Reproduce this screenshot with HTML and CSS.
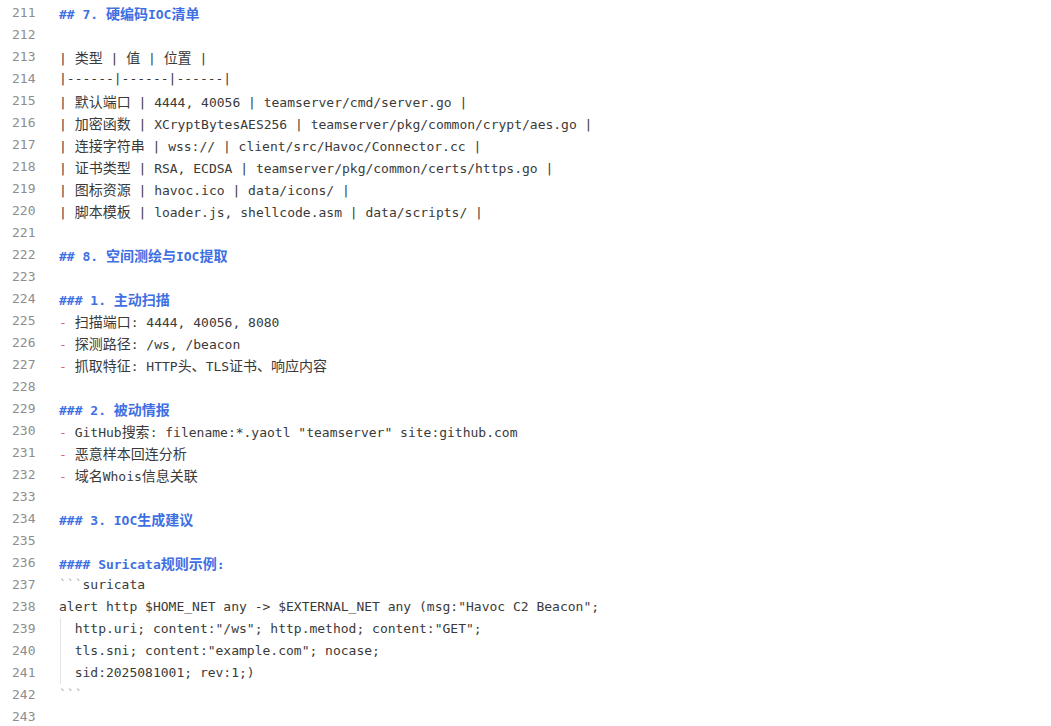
FILE: index.html
```html
<!DOCTYPE html>
<html lang="zh-CN">
<head>
<meta charset="utf-8">
<title>IOC</title>
<link rel="stylesheet" href="styles.css">
</head>
<body>
<div class="editor">
  <div class="row"><span class="ln">211</span><span class="tx h">## 7. <span class="zh">硬编码</span>IOC<span class="zh">清单</span></span></div>
  <div class="row"><span class="ln">212</span><span class="tx"></span></div>
  <div class="row"><span class="ln">213</span><span class="tx">| <span class="zh">类型</span> | <span class="zh">值</span> | <span class="zh">位置</span> |</span></div>
  <div class="row"><span class="ln">214</span><span class="tx">|------|------|------|</span></div>
  <div class="row"><span class="ln">215</span><span class="tx">| <span class="zh">默认端口</span> | 4444, 40056 | teamserver/cmd/server.go |</span></div>
  <div class="row"><span class="ln">216</span><span class="tx">| <span class="zh">加密函数</span> | XCryptBytesAES256 | teamserver/pkg/common/crypt/aes.go |</span></div>
  <div class="row"><span class="ln">217</span><span class="tx">| <span class="zh">连接字符串</span> | wss:// | client/src/Havoc/Connector.cc |</span></div>
  <div class="row"><span class="ln">218</span><span class="tx">| <span class="zh">证书类型</span> | RSA, ECDSA | teamserver/pkg/common/certs/https.go |</span></div>
  <div class="row"><span class="ln">219</span><span class="tx">| <span class="zh">图标资源</span> | havoc.ico | data/icons/ |</span></div>
  <div class="row"><span class="ln">220</span><span class="tx">| <span class="zh">脚本模板</span> | loader.js, shellcode.asm | data/scripts/ |</span></div>
  <div class="row"><span class="ln">221</span><span class="tx"></span></div>
  <div class="row"><span class="ln">222</span><span class="tx h">## 8. <span class="zh">空间测绘与</span>IOC<span class="zh">提取</span></span></div>
  <div class="row"><span class="ln">223</span><span class="tx"></span></div>
  <div class="row"><span class="ln">224</span><span class="tx h">### 1. <span class="zh">主动扫描</span></span></div>
  <div class="row"><span class="ln">225</span><span class="tx"><span class="mk">-</span> <span class="zh">扫描端口</span>: 4444, 40056, 8080</span></div>
  <div class="row"><span class="ln">226</span><span class="tx"><span class="mk">-</span> <span class="zh">探测路径</span>: /ws, /beacon</span></div>
  <div class="row"><span class="ln">227</span><span class="tx"><span class="mk">-</span> <span class="zh">抓取特征</span>: HTTP<span class="zh">头、</span>TLS<span class="zh">证书、响应内容</span></span></div>
  <div class="row"><span class="ln">228</span><span class="tx"></span></div>
  <div class="row"><span class="ln">229</span><span class="tx h">### 2. <span class="zh">被动情报</span></span></div>
  <div class="row"><span class="ln">230</span><span class="tx"><span class="mk">-</span> GitHub<span class="zh">搜索</span>: filename:*.yaotl "teamserver" site:github.com</span></div>
  <div class="row"><span class="ln">231</span><span class="tx"><span class="mk">-</span> <span class="zh">恶意样本回连分析</span></span></div>
  <div class="row"><span class="ln">232</span><span class="tx"><span class="mk">-</span> <span class="zh">域名</span>Whois<span class="zh">信息关联</span></span></div>
  <div class="row"><span class="ln">233</span><span class="tx"></span></div>
  <div class="row"><span class="ln">234</span><span class="tx h">### 3. IOC<span class="zh">生成建议</span></span></div>
  <div class="row"><span class="ln">235</span><span class="tx"></span></div>
  <div class="row"><span class="ln">236</span><span class="tx h">#### Suricata<span class="zh">规则示例</span>:</span></div>
  <div class="row"><span class="ln">237</span><span class="tx"><span class="fence">```</span>suricata</span></div>
  <div class="row"><span class="ln">238</span><span class="tx">alert http $HOME_NET any -&gt; $EXTERNAL_NET any (msg:"Havoc C2 Beacon";</span></div>
  <div class="row"><span class="ln">239</span><span class="tx guide">  http.uri; content:"/ws"; http.method; content:"GET";</span></div>
  <div class="row"><span class="ln">240</span><span class="tx guide">  tls.sni; content:"example.com"; nocase;</span></div>
  <div class="row"><span class="ln">241</span><span class="tx guide">  sid:2025081001; rev:1;)</span></div>
  <div class="row"><span class="ln">242</span><span class="tx"><span class="fence">```</span></span></div>
  <div class="row"><span class="ln">243</span><span class="tx"></span></div>
</div>
</body>
</html>
```
FILE: styles.css
```css
html, body {
  margin: 0;
  padding: 0;
  background: #ffffff;
}

.editor {
  padding-top: 2px;
  display: flex;
  flex-direction: column;
  font-family: "DejaVu Sans Mono", "Liberation Mono", "Noto Sans CJK SC", monospace;
  font-size: 13px;
  color: #3a3a3a;
}

.row {
  display: flex;
  height: 22px;
  line-height: 22px;
}

.ln {
  width: 59px;
  flex: 0 0 59px;
  box-sizing: border-box;
  padding-left: 12px;
  color: #8e8e8e;
}

.tx {
  white-space: pre;
  flex: 1;
}

.zh {
  font-family: "Noto Sans CJK SC", sans-serif;
  font-size: 14px;
  line-height: 22px;
}

.h {
  color: #3e6fe3;
  font-weight: bold;
}

.mk {
  color: #e5646f;
}

.fence {
  color: #ababab;
}

.guide {
  background-image: linear-gradient(#e4e4e4, #e4e4e4);
  background-repeat: no-repeat;
  background-position: 1px 0;
  background-size: 1px 100%;
}
```
